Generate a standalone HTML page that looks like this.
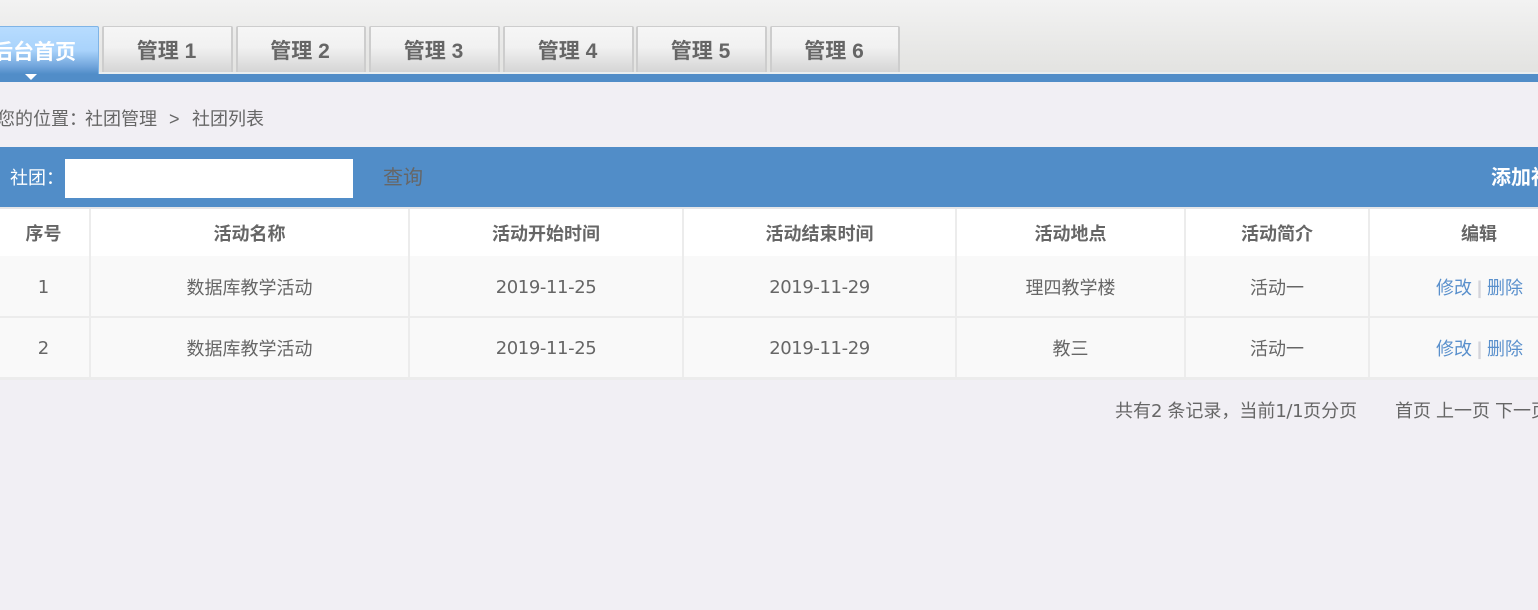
<!DOCTYPE html>
<html lang="zh"><head><meta charset="utf-8"><title>社团列表</title>
<style>
html,body{margin:0;padding:0;width:1538px;height:610px;overflow:hidden;background:#f1eff4}
body{position:relative;font-family:"DejaVu Sans","Noto Sans CJK SC",sans-serif;color:#666}
*{box-sizing:border-box}
div,span,a{position:absolute;white-space:nowrap}
.cjk{font-family:"Liberation Sans","Noto Sans CJK SC",sans-serif}
#top{left:0;top:0;width:1538px;height:72px;background:linear-gradient(#f2f2f2,#e3e3e1)}
#line{left:0;top:72px;width:1538px;height:2px;background:#e9eef0}
#blue{left:0;top:74px;width:1538px;height:8px;background:#518dc8}
.tab{top:26px;height:46px;border:1px solid #cdcdcd;border-bottom:0;border-left-width:2px;border-right-width:2px;border-top-width:1px;border-radius:2px 2px 0 0;background:linear-gradient(#f6f6f6,#f1f1f1 45%,#d5d5d5);text-align:center;font-size:21px;font-weight:bold;line-height:50px;padding-right:2px;color:#666;font-family:"Liberation Sans","Noto Sans CJK SC",sans-serif}
.tab span{position:static}
#home{left:-20px;top:26px;width:119px;height:48px;border:1px solid #7fb4e6;border-bottom:0;border-radius:2px 2px 0 0;background:linear-gradient(#b7dcff,#a9d3fb 50%,#6fa3da 85%,#518dc8);color:#fff;font-size:21px;font-weight:bold;line-height:51px;text-align:right;padding-right:22px;font-family:"Liberation Sans","Noto Sans CJK SC",sans-serif}
#arrow{left:25px;top:74px;width:0;height:0;border-left:6px solid transparent;border-right:6px solid transparent;border-top:6px solid #fff}
.crumb{top:107px;font-size:18px;line-height:24px;color:#666}
#bar{left:0;top:147px;width:1538px;height:60px;background:#518dc8}
.cell{text-align:center;font-size:18px;line-height:24px;color:#666}
.num{letter-spacing:-.4px}
.th{font-weight:bold;top:222px}
.v{background:#ececec;width:2px;top:209px;height:169px}
a{color:#5a90cc;text-decoration:none}
.d{position:static;font-family:"DejaVu Sans",sans-serif;letter-spacing:-.4px}
</style></head><body>
<div id="top"></div><div id="line"></div><div id="blue"></div>
<div id="home">后台首页</div><div id="arrow"></div>
<div class="tab" style="left:102px;width:131px"><span>管理 1</span></div>
<div class="tab" style="left:236px;width:130px"><span>管理 2</span></div>
<div class="tab" style="left:369px;width:131px"><span>管理 3</span></div>
<div class="tab" style="left:503px;width:131px"><span>管理 4</span></div>
<div class="tab" style="left:636px;width:131px"><span>管理 5</span></div>
<div class="tab" style="left:770px;width:130px"><span>管理 6</span></div>
<div class="crumb cjk" style="left:-3px">您的位置：</div>
<div class="crumb cjk" style="left:85px">社团管理</div>
<div class="crumb cjk" style="left:169px">&gt;</div>
<div class="crumb cjk" style="left:192px">社团列表</div>
<div id="bar"></div>
<div class="cjk" style="left:10px;top:165px;font-size:18px;line-height:26px;color:#fff">社团：</div>
<div style="left:65px;top:159px;width:288px;height:39px;background:#fff"></div>
<div class="cjk" style="left:383px;top:165px;font-size:20px;line-height:26px;color:#666">查询</div>
<div class="cjk" style="left:1491px;top:165px;font-size:20px;line-height:26px;font-weight:bold;color:#fff">添加社团</div>

<div style="left:0;top:207px;width:1538px;height:2px;background:#e6e6e8"></div>
<div style="left:0;top:209px;width:1538px;height:47px;background:#fff"></div>
<div style="left:0;top:256px;width:1538px;height:60px;background:#f9f9f9"></div>
<div style="left:0;top:316px;width:1538px;height:2px;background:#ececec"></div>
<div style="left:0;top:318px;width:1538px;height:59px;background:#f9f9f9"></div>
<div style="left:0;top:377px;width:1538px;height:3px;background:#ececec"></div>
<div class="v" style="left:89px"></div><div class="v" style="left:408px"></div><div class="v" style="left:682px"></div><div class="v" style="left:955px"></div><div class="v" style="left:1184px"></div><div class="v" style="left:1368px"></div>

<div class="cell th cjk" style="left:-3px;width:93px">序号</div>
<div class="cell th cjk" style="left:91px;width:317px">活动名称</div>
<div class="cell th cjk" style="left:410px;width:272px">活动开始时间</div>
<div class="cell th cjk" style="left:684px;width:271px">活动结束时间</div>
<div class="cell th cjk" style="left:957px;width:227px">活动地点</div>
<div class="cell th cjk" style="left:1186px;width:182px">活动简介</div>
<div class="cell th cjk" style="left:1369px;width:220px">编辑</div>

<div class="cell" style="left:-3px;width:93px;top:276px">1</div>
<div class="cell cjk" style="left:91px;width:317px;top:276px">数据库教学活动</div>
<div class="cell num" style="left:410px;width:272px;top:276px">2019-11-25</div>
<div class="cell num" style="left:684px;width:271px;top:276px">2019-11-29</div>
<div class="cell cjk" style="left:957px;width:227px;top:276px">理四教学楼</div>
<div class="cell cjk" style="left:1186px;width:182px;top:276px">活动一</div>
<a class="cjk" style="left:1436px;top:276px;font-size:18px;line-height:24px">修改</a><div class="cjk" style="left:1477px;top:276px;font-size:18px;line-height:24px;font-weight:bold;color:#d4d4da">|</div><a class="cjk" style="left:1487px;top:276px;font-size:18px;line-height:24px">删除</a>

<div class="cell" style="left:-3px;width:93px;top:337px">2</div>
<div class="cell cjk" style="left:91px;width:317px;top:337px">数据库教学活动</div>
<div class="cell num" style="left:410px;width:272px;top:337px">2019-11-25</div>
<div class="cell num" style="left:684px;width:271px;top:337px">2019-11-29</div>
<div class="cell cjk" style="left:957px;width:227px;top:337px">教三</div>
<div class="cell cjk" style="left:1186px;width:182px;top:337px">活动一</div>
<a class="cjk" style="left:1436px;top:337px;font-size:18px;line-height:24px">修改</a><div class="cjk" style="left:1477px;top:337px;font-size:18px;line-height:24px;font-weight:bold;color:#d4d4da">|</div><a class="cjk" style="left:1487px;top:337px;font-size:18px;line-height:24px">删除</a>

<div class="cjk" style="left:1115px;top:399px;font-size:18px;line-height:24px;color:#666">共有<span class="d">2 </span>条记录，当前<span class="d">1/1</span>页分页</div>
<div class="cjk" style="left:1395px;top:399px;font-size:18px;line-height:24px;color:#666">首页 上一页 下一页</div>
</body></html>
